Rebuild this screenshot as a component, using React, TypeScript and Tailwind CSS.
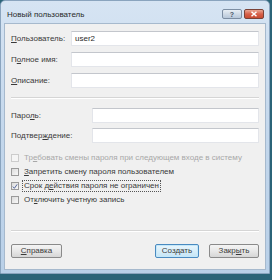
const font = { fontFamily: '"Liberation Sans", Arial, sans-serif' };

function Field({ label, x, value }: { label: React.ReactNode; x: string; value?: string }) {
    return <div className="flex items-center h-[15px]">
        <div className={`${x} shrink-0 text-[8px] text-[#3a3a3a] leading-none`}>{label}</div>
        <div className="flex-1 h-[15px] bg-white border border-[#e3e5ea] border-t-[#c3c6cc] flex items-center px-[3px] text-[8px] text-[#2a2a2a]">{value}</div>
    </div>;
}

function Check({ label, checked, disabled, focus }: { label: React.ReactNode; checked?: boolean; disabled?: boolean; focus?: boolean }) {
    return <div className="flex items-center h-[14px]">
        <div className={`w-[8px] h-[8px] border flex items-center justify-center ${disabled ? 'border-[#cccccc] bg-[#f5f5f5]' : 'border-[#9a9a9a] bg-gradient-to-br from-[#dcdcdc] to-[#f8f8f8]'}`}>
            {checked && <svg width="7" height="7" viewBox="0 0 7 7"><path d="M1 3.6 L2.8 5.6 L6 1" fill="none" stroke="#4a5f9a" strokeWidth="1.1" /></svg>}
        </div>
        <div className={`ml-[3px] text-[8px] leading-none px-[1px] py-[1px] border ${focus ? 'border-dotted border-[#555]' : 'border-transparent'} ${disabled ? 'text-[#a8a8a8]' : 'text-[#3a3a3a]'}`}>{label}</div>
    </div>;
}

function Btn({ children, def, w }: { children: React.ReactNode; def?: boolean; w: string }) {
    return <div className={`${w} h-[14px] rounded-[2px] border flex items-center justify-center text-[8px] text-[#3a3a3a] ${def ? 'border-[#4a8ac0] bg-gradient-to-b from-[#eaf6fd] to-[#c4e5f6] shadow-[inset_0_0_0_1px_#c5e8f9]' : 'border-[#8a8a8a] bg-gradient-to-b from-[#f4f4f4] via-[#e8e8e8] to-[#d6d6d6]'}`}>{children}</div>;
}

export default function App() {
    return <div className="w-[272px] h-[280px] bg-[#2b6478] overflow-hidden" style={font}>
        <div className="w-[270px] h-[274px] flex flex-col rounded-t-[5px] border border-[#8aa4be] bg-gradient-to-b from-[#d6e4f3] via-[#c3d7ec] to-[#b9d0e8]">
            <div className="h-[22px] flex items-center pl-[6px] pr-[5px] shrink-0">
                <span className="text-[8px] text-[#2a2a2a] mt-[6px]">Новый пользователь</span>
                <div className="ml-auto flex gap-[2px] mt-[4px]">
                    <div className="w-[20px] h-[10px] rounded-[2px] border border-[#7d8ea3] bg-gradient-to-b from-[#e8eef5] via-[#cfdae6] to-[#b8c8da] flex items-center justify-center text-[7px] leading-none text-[#4a5668] font-bold">?</div>
                    <div className="w-[20px] h-[10px] rounded-[2px] border border-[#7a4238] bg-gradient-to-b from-[#e9a592] via-[#d6604a] to-[#c84a30] flex items-center justify-center">
                        <svg width="8" height="6" viewBox="0 0 8 6"><path d="M1.5 0.8 L6.5 5.2 M6.5 0.8 L1.5 5.2" stroke="#fff" strokeWidth="1.5" /></svg>
                    </div>
                </div>
            </div>
            <div className="mx-[3px] mb-[3px] flex-1 bg-[#f0f0f0] border border-[#a6b9cd] flex flex-col px-[6px] pt-[7px]">
                <div className="flex flex-col gap-[6px]">
                    <Field label={<><u>П</u>ользователь:</>} x="w-[60px]" value="user2" />
                    <Field label={<>П<u>о</u>лное имя:</>} x="w-[60px]" />
                    <Field label={<><u>О</u>писание:</>} x="w-[60px]" />
                </div>
                <div className="mt-[9px] h-[2px] border-t border-[#d5d5d5] border-b border-b-white" />
                <div className="mt-[9px] flex flex-col gap-[5px]">
                    <Field label={<>Паро<u>л</u>ь:</>} x="w-[81px]" />
                    <Field label={<>Подтвер<u>ж</u>дение:</>} x="w-[81px]" />
                </div>
                <div className="mt-[8px] flex flex-col">
                    <Check disabled label={<>Тр<u>е</u>бовать смены пароля при следующем входе в систему</>} />
                    <Check label={<><u>З</u>апретить смену пароля пользователем</>} />
                    <Check checked focus label={<>Срок д<u>е</u>йствия пароля не ограничен</>} />
                    <Check label={<>От<u>к</u>лючить учетную запись</>} />
                </div>
                <div className="mt-[23px] h-[2px] border-t border-[#d5d5d5] border-b border-b-white" />
                <div className="mt-[12px] flex items-center">
                    <Btn w="w-[51px]"><u>С</u>правка</Btn>
                    <div className="ml-auto flex gap-[10px]">
                        <Btn def w="w-[44px]">Создать</Btn>
                        <Btn w="w-[50px]">Закр<u>ы</u>ть</Btn>
                    </div>
                </div>
            </div>
        </div>
    </div>;
}
